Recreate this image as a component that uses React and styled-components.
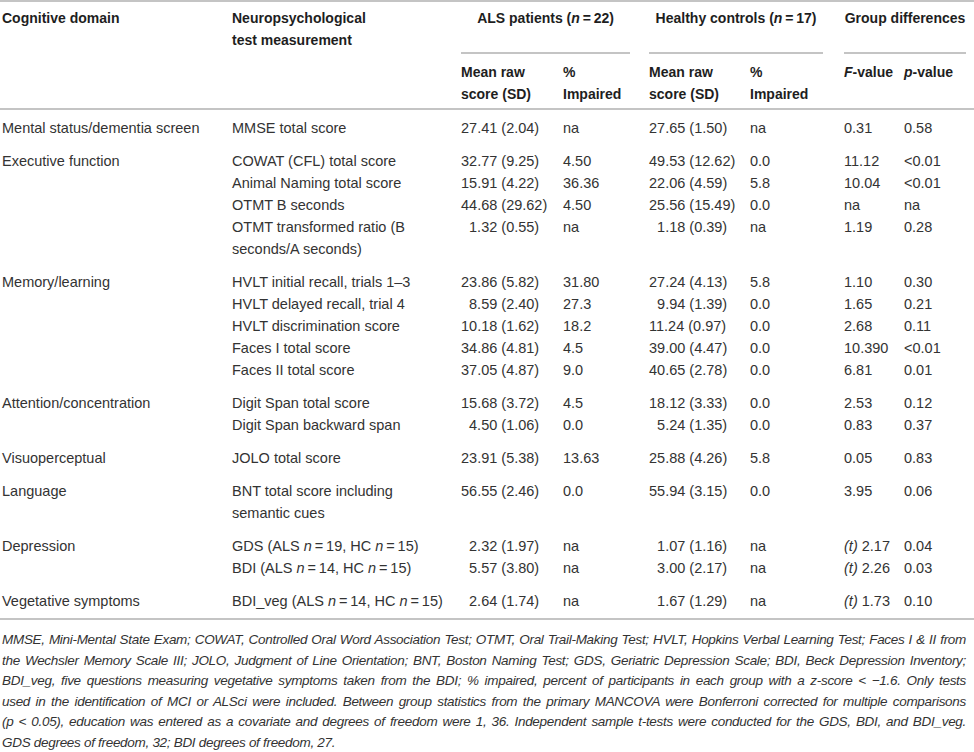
import React from 'react'
import styled, { createGlobalStyle } from 'styled-components'

const GlobalStyle = createGlobalStyle`
  html, body {
    margin: 0;
    padding: 0;
    background: #fff;
  }
  body {
    font-family: "Liberation Sans", Arial, sans-serif;
    color: #333;
  }
`

const Page = styled.div`
  width: 974px;
  font-family: "Liberation Sans", Arial, sans-serif;
`

const Table = styled.table`
  width: 974px;
  table-layout: fixed;
  border-collapse: separate;
  border-spacing: 0;
  border-top: 2px solid #c4c4c4;
  border-bottom: 2px solid #c4c4c4;
`

const Em = styled.i`
  font-style: italic;
`

const HeadCell = styled.th`
  text-align: left;
  vertical-align: top;
  padding: 5px 0 0 ${p => (p.$first ? 2 : 0)}px;
  font-size: 14px;
  line-height: 22px;
  font-weight: bold;
  color: #1e1e1e;
  border-bottom: 2px solid #c4c4c4;
`

const GroupCell = styled.th`
  padding: 5px ${p => p.$gap}px 0 0;
  vertical-align: top;
`

const GroupTitle = styled.div`
  text-align: center;
  font-size: 14px;
  line-height: 22px;
  font-weight: bold;
  color: #1e1e1e;
  padding-bottom: 23px;
  border-bottom: 2px solid #c4c4c4;
`

const SubCell = styled.th`
  text-align: left;
  vertical-align: top;
  padding: 7px 0 3px 0;
  font-size: 14px;
  line-height: 22px;
  font-weight: bold;
  color: #1e1e1e;
  white-space: nowrap;
  border-bottom: 2px solid #c4c4c4;
`

const Cell = styled.td`
  vertical-align: top;
  padding: ${p => p.$top}px 0 ${p => p.$bottom}px ${p => (p.$first ? 2 : 0)}px;
  font-size: 14.5px;
  line-height: 22px;
  color: #333;
  white-space: nowrap;
`

const MeanText = styled.span`
  padding-left: ${p => (p.$pad ? '0.556em' : '0')};
`

const Notes = styled.div`
  padding: 10px 8px 0 2px;
  font-size: 13.5px;
  line-height: 20.6px;
  letter-spacing: -0.3px;
  font-style: italic;
  color: #333;
`

const NoteLine = styled.div`
  text-align: ${p => (p.$last ? 'left' : 'justify')};
  text-align-last: ${p => (p.$last ? 'left' : 'justify')};
`

const N = () => <Em>n</Em>
const Eq = '\u2009=\u2009'

const groups = [
  {
    domain: 'Mental status/dementia screen',
    rows: [['MMSE total score', '27.41 (2.04)', 'na', '27.65 (1.50)', 'na', '0.31', '0.58']],
  },
  {
    domain: 'Executive function',
    rows: [
      ['COWAT (CFL) total score', '32.77 (9.25)', '4.50', '49.53 (12.62)', '0.0', '11.12', '<0.01'],
      ['Animal Naming total score', '15.91 (4.22)', '36.36', '22.06 (4.59)', '5.8', '10.04', '<0.01'],
      ['OTMT B seconds', '44.68 (29.62)', '4.50', '25.56 (15.49)', '0.0', 'na', 'na'],
      [<>OTMT transformed ratio (B<br />seconds/A seconds)</>, '1.32 (0.55)', 'na', '1.18 (0.39)', 'na', '1.19', '0.28'],
    ],
  },
  {
    domain: 'Memory/learning',
    rows: [
      ['HVLT initial recall, trials 1–3', '23.86 (5.82)', '31.80', '27.24 (4.13)', '5.8', '1.10', '0.30'],
      ['HVLT delayed recall, trial 4', '8.59 (2.40)', '27.3', '9.94 (1.39)', '0.0', '1.65', '0.21'],
      ['HVLT discrimination score', '10.18 (1.62)', '18.2', '11.24 (0.97)', '0.0', '2.68', '0.11'],
      ['Faces I total score', '34.86 (4.81)', '4.5', '39.00 (4.47)', '0.0', '10.390', '<0.01'],
      ['Faces II total score', '37.05 (4.87)', '9.0', '40.65 (2.78)', '0.0', '6.81', '0.01'],
    ],
  },
  {
    domain: 'Attention/concentration',
    rows: [
      ['Digit Span total score', '15.68 (3.72)', '4.5', '18.12 (3.33)', '0.0', '2.53', '0.12'],
      ['Digit Span backward span', '4.50 (1.06)', '0.0', '5.24 (1.35)', '0.0', '0.83', '0.37'],
    ],
  },
  {
    domain: 'Visuoperceptual',
    rows: [['JOLO total score', '23.91 (5.38)', '13.63', '25.88 (4.26)', '5.8', '0.05', '0.83']],
  },
  {
    domain: 'Language',
    rows: [[<>BNT total score including<br />semantic cues</>, '56.55 (2.46)', '0.0', '55.94 (3.15)', '0.0', '3.95', '0.06']],
  },
  {
    domain: 'Depression',
    rows: [
      [<>GDS (ALS <N />{Eq}19, HC <N />{Eq}15)</>, '2.32 (1.97)', 'na', '1.07 (1.16)', 'na', <><Em>(t)</Em> 2.17</>, '0.04'],
      [<>BDI (ALS <N />{Eq}14, HC <N />{Eq}15)</>, '5.57 (3.80)', 'na', '3.00 (2.17)', 'na', <><Em>(t)</Em> 2.26</>, '0.03'],
    ],
  },
  {
    domain: 'Vegetative symptoms',
    rows: [
      [<>BDI_veg (ALS <N />{Eq}14, HC <N />{Eq}15)</>, '2.64 (1.74)', 'na', '1.67 (1.29)', 'na', <><Em>(t)</Em> 1.73</>, '0.10'],
    ],
  },
]

// footnote lines, broken the way the printed table breaks them
const notes = [
  'MMSE, Mini-Mental State Exam; COWAT, Controlled Oral Word Association Test; OTMT, Oral Trail-Making Test; HVLT, Hopkins Verbal Learning Test; Faces I & II from',
  'the Wechsler Memory Scale III; JOLO, Judgment of Line Orientation; BNT, Boston Naming Test; GDS, Geriatric Depression Scale; BDI, Beck Depression Inventory;',
  'BDI_veg, five questions measuring vegetative symptoms taken from the BDI; % impaired, percent of participants in each group with a z-score < −1.6. Only tests',
  'used in the identification of MCI or ALSci were included. Between group statistics from the primary MANCOVA were Bonferroni corrected for multiple comparisons',
  '(p < 0.05), education was entered as a covariate and degrees of freedom were 1, 36. Independent sample t-tests were conducted for the GDS, BDI, and BDI_veg.',
  'GDS degrees of freedom, 32; BDI degrees of freedom, 27.',
]

const widths = [232, 229, 102, 86, 101, 94, 60, 70]

// single-digit means sit one figure to the right, as in the print
const Mean = ({ v }) => <MeanText $pad={/^\d\./.test(v)}>{v}</MeanText>

const App = () => {
  const last = groups.length - 1
  return (
    <Page>
      <GlobalStyle />
      <Table>
        <colgroup>
          {widths.map((w, i) => (
            <col key={i} style={{ width: w }} />
          ))}
        </colgroup>
        <thead>
          <tr>
            <HeadCell rowSpan={2} $first>Cognitive domain</HeadCell>
            <HeadCell rowSpan={2}>Neuropsychological<br />test measurement</HeadCell>
            <GroupCell colSpan={2} $gap={19}>
              <GroupTitle>ALS patients (<Em>n</Em>{Eq}22)</GroupTitle>
            </GroupCell>
            <GroupCell colSpan={2} $gap={21}>
              <GroupTitle>Healthy controls (<Em>n</Em>{Eq}17)</GroupTitle>
            </GroupCell>
            <GroupCell colSpan={2} $gap={8}>
              <GroupTitle>Group differences</GroupTitle>
            </GroupCell>
          </tr>
          <tr>
            <SubCell>Mean raw<br />score (SD)</SubCell>
            <SubCell>%<br />Impaired</SubCell>
            <SubCell>Mean raw<br />score (SD)</SubCell>
            <SubCell>%<br />Impaired</SubCell>
            <SubCell><Em>F</Em>-value</SubCell>
            <SubCell><Em>p</Em>-value</SubCell>
          </tr>
        </thead>
        {groups.map((g, gi) => (
          <tbody key={gi}>
            {g.rows.map((r, ri) => {
              const top = ri === 0 ? (gi === 0 ? 7 : 11) : 0
              const bottom = gi === last && ri === g.rows.length - 1 ? 6 : 0
              return (
                <tr key={ri}>
                  <Cell $first $top={top} $bottom={bottom}>
                    {ri === 0 ? g.domain : ''}
                  </Cell>
                  {r.map((v, ci) => (
                    <Cell key={ci} $top={top} $bottom={bottom}>
                      {ci === 1 || ci === 3 ? <Mean v={v} /> : v}
                    </Cell>
                  ))}
                </tr>
              )
            })}
          </tbody>
        ))}
      </Table>
      <Notes>
        {notes.map((line, i) => (
          <NoteLine key={i} $last={i === notes.length - 1}>{line}</NoteLine>
        ))}
      </Notes>
    </Page>
  )
}

export default App
